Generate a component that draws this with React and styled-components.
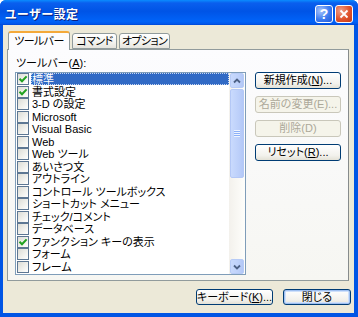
import styled, { createGlobalStyle } from "styled-components";

const GlobalStyle = createGlobalStyle`
  html, body {
    margin: 0;
    padding: 0;
    background: #ffffff;
  }
  body {
    font-family: "Liberation Sans", "Noto Sans CJK JP", sans-serif;
    font-size: 11px;
    font-feature-settings: "palt";
  }
`;

const toolbars = [
  { name: "標準", checked: true, selected: true },
  { name: "書式設定", checked: true },
  { name: "3-D の設定" },
  { name: "Microsoft" },
  { name: "Visual Basic" },
  { name: "Web" },
  { name: "Web ツール" },
  { name: "あいさつ文" },
  { name: "アウトライン" },
  { name: "コントロール ツールボックス" },
  { name: "ショートカット メニュー" },
  { name: "チェック/コメント" },
  { name: "データベース" },
  { name: "ファンクション キーの表示", checked: true },
  { name: "フォーム" },
  { name: "フレーム" },
];

function CheckMark() {
  return (
    <svg width="10" height="10" viewBox="0 0 10 10">
      <path
        d="M1.5 4.8 L4 7.3 L8.6 2.4"
        fill="none"
        stroke="#21a121"
        strokeWidth="2"
      />
    </svg>
  );
}

function Arrow({ down }) {
  return (
    <svg width="8" height="6" viewBox="0 0 8 6">
      <path
        d={down ? "M1 1.5 L4 4.5 L7 1.5" : "M1 4.5 L4 1.5 L7 4.5"}
        fill="none"
        stroke="#4d6185"
        strokeWidth="1.8"
      />
    </svg>
  );
}

export default function App() {
  return (
    <>
      <GlobalStyle />
      <Window>
        <TitleBar>
          <Title>ユーザー設定</Title>
          <CaptionButtons>
            <CaptionButton>?</CaptionButton>
            <CaptionButton close>
              <svg width="10" height="10" viewBox="0 0 10 10">
                <path
                  d="M1.5 1.5 L8.5 8.5 M8.5 1.5 L1.5 8.5"
                  stroke="#fff"
                  strokeWidth="1.8"
                />
              </svg>
            </CaptionButton>
          </CaptionButtons>
        </TitleBar>
        <Body>
          <TabStrip>
            <Tab active width="62px">ツールバー</Tab>
            <Tab width="45px">コマンド</Tab>
            <Tab width="51px">オプション</Tab>
          </TabStrip>
          <Panel>
            <ListColumn>
              <Label>
                ツールバー(<u>A</u>):
              </Label>
              <ListBox>
                <Items>
                  {toolbars.map((t) => (
                    <Item key={t.name}>
                      <Check>{t.checked && <CheckMark />}</Check>
                      <ItemText selected={t.selected}>{t.name}</ItemText>
                    </Item>
                  ))}
                </Items>
                <ScrollBar>
                  <ScrollButton>
                    <Arrow />
                  </ScrollButton>
                  <Track>
                    <Thumb>
                      <Grip />
                    </Thumb>
                  </Track>
                  <ScrollButton>
                    <Arrow down />
                  </ScrollButton>
                </ScrollBar>
              </ListBox>
            </ListColumn>
            <ButtonColumn>
              <Button>
                新規作成(<u>N</u>)...
              </Button>
              <Button disabled>名前の変更(E)...</Button>
              <Button disabled>削除(D)</Button>
              <Button>
                リセット(<u>R</u>)...
              </Button>
            </ButtonColumn>
          </Panel>
          <Footer>
            <Button width="77px" height="16px">
              キーボード(<u>K</u>)...
            </Button>
            <Button width="68px" height="16px" focused>
              閉じる
            </Button>
          </Footer>
        </Body>
      </Window>
    </>
  );
}

const Window = styled.div`
  width: 358px;
  height: 317px;
  box-sizing: border-box;
  display: flex;
  flex-direction: column;
  background: #0055e5;
  border-radius: 6px 6px 0 0;
  overflow: hidden;
`;

const TitleBar = styled.div`
  height: 25px;
  flex: none;
  display: flex;
  align-items: center;
  justify-content: space-between;
  padding: 0 5px;
  background: linear-gradient(
    #0a8cff 0%,
    #0a5fee 12%,
    #0054e6 45%,
    #0063f8 85%,
    #0058ec 95%,
    #0046d4 100%
  );
`;

const Title = styled.div`
  color: #ffffff;
  font-weight: bold;
  font-size: 12px;
  letter-spacing: 0.5px;
  text-shadow: 1px 1px 0 #0a1f80;
  padding-top: 1px;
`;

const CaptionButtons = styled.div`
  display: flex;
  gap: 2px;
  padding-top: 3px;
`;

const CaptionButton = styled.div`
  width: 18px;
  height: 18px;
  box-sizing: border-box;
  border: 1px solid #ffffff;
  border-radius: 3px;
  display: flex;
  align-items: center;
  justify-content: center;
  color: #ffffff;
  font-weight: bold;
  font-size: 14px;
  font-family: "Liberation Sans", sans-serif;
  background: ${(p) =>
    p.close
      ? "radial-gradient(circle at 30% 30%, #f0a08a, #e0532c 55%, #c23a1a)"
      : "radial-gradient(circle at 30% 30%, #a9c4fb, #3d7bf0 55%, #2459d8)"};
`;

const Body = styled.div`
  flex: 1;
  margin: 0 4px 4px 3px;
  background: #ece9d8;
  display: flex;
  flex-direction: column;
`;

const TabStrip = styled.div`
  display: flex;
  align-items: flex-end;
  height: 18px;
  margin-top: 6px;
  padding-left: 5px;
  position: relative;
  z-index: 1;
`;

const Tab = styled.div`
  box-sizing: border-box;
  width: ${(p) => p.width};
  height: ${(p) => (p.active ? "19px" : "16px")};
  margin-bottom: ${(p) => (p.active ? "-1px" : "0")};
  margin-right: ${(p) => (p.active ? "2px" : "2px")};
  padding-top: ${(p) => (p.active ? "2px" : "1px")};
  border: 1px solid #919b9c;
  border-bottom: ${(p) => (p.active ? "none" : "1px solid #919b9c")};
  border-top: ${(p) => (p.active ? "2px solid #f4a93a" : "1px solid #919b9c")};
  border-radius: 3px 3px 0 0;
  background: ${(p) =>
    p.active ? "#fcfcfe" : "linear-gradient(#ffffff, #f3f3ef 60%, #e6e5de)"};
  font-size: 11px;
  line-height: 13px;
  letter-spacing: -0.6px;
  text-align: center;
  color: #000000;
  white-space: nowrap;
`;

const Panel = styled.div`
  box-sizing: border-box;
  width: 342px;
  height: 232px;
  margin-left: 4px;
  border: 1px solid #919b9c;
  border-right-color: #868b8c;
  background: linear-gradient(#fcfcfe, #f6f6f2);
  display: flex;
  padding: 7px 0 0 7px;
  gap: 9px;
`;

const ListColumn = styled.div`
  display: flex;
  flex-direction: column;
`;

const Label = styled.div`
  height: 15px;
  line-height: 13px;
  font-size: 11px;
  color: #000000;
  margin-left: 1px;
  u {
    text-underline-offset: 1px;
  }
`;

const ListBox = styled.div`
  box-sizing: border-box;
  width: 231px;
  height: 203px;
  border: 1px solid #7f9db9;
  background: #ffffff;
  display: flex;
`;

const Items = styled.div`
  flex: 1;
  display: flex;
  flex-direction: column;
  overflow: hidden;
`;

const Item = styled.div`
  height: 12.5px;
  flex: none;
  display: flex;
  align-items: center;
`;

const Check = styled.div`
  width: 12px;
  height: 12px;
  box-sizing: border-box;
  margin: 0 2px 0 1px;
  border: 1px solid #5d7793;
  background: linear-gradient(135deg, #dcdcd5, #f2f2ee 60%, #ffffff);
  display: flex;
  align-items: center;
  justify-content: center;
  flex: none;
`;

const ItemText = styled.div`
  flex: 1;
  height: 12px;
  line-height: 12px;
  font-size: 11px;
  padding-left: 1px;
  white-space: nowrap;
  color: ${(p) => (p.selected ? "#ffffff" : "#000000")};
  background: ${(p) => (p.selected ? "#316ac5" : "transparent")};
  outline: ${(p) => (p.selected ? "1px dotted #c8d6f0" : "none")};
  outline-offset: -1px;
`;

const ScrollBar = styled.div`
  width: 16px;
  flex: none;
  display: flex;
  flex-direction: column;
  background: linear-gradient(90deg, #f3f1ec, #fefefb);
`;

const ScrollButton = styled.div`
  height: 15px;
  flex: none;
  box-sizing: border-box;
  margin: 0 1px;
  border: 1px solid #b7cbf6;
  border-radius: 2px;
  background: linear-gradient(90deg, #c8d9fc, #bed1fa 60%, #b2c7f6);
  display: flex;
  align-items: center;
  justify-content: center;
`;

const Track = styled.div`
  flex: 1;
  padding-top: 1px;
`;

const Thumb = styled.div`
  height: 89px;
  box-sizing: border-box;
  margin: 0 1px;
  border: 1px solid #b4c8f6;
  border-radius: 2px;
  background: linear-gradient(90deg, #c9dafd, #bdd0fa 60%, #b3c8f7);
  display: flex;
  align-items: center;
  justify-content: center;
`;

const Grip = styled.div`
  width: 6px;
  height: 7px;
  background: repeating-linear-gradient(
    #eef4fe 0,
    #eef4fe 1px,
    #8cb0f8 1px,
    #8cb0f8 2px
  );
`;

const ButtonColumn = styled.div`
  display: flex;
  flex-direction: column;
  gap: 7px;
  padding-top: 15px;
`;

const Button = styled.div`
  width: ${(p) => p.width || "86px"};
  height: ${(p) => p.height || "17px"};
  box-sizing: border-box;
  border: 1px solid ${(p) => (p.disabled ? "#c9c7ba" : "#003c74")};
  border-radius: 3px;
  background: ${(p) =>
    p.disabled ? "#f5f4ea" : "linear-gradient(#ffffff, #f2f1ec 70%, #e3e1d6)"};
  box-shadow: ${(p) =>
    p.focused ? "inset 0 0 0 1px #9fc0f1, inset 0 0 0 2px #cfe0fa" : "none"};
  color: ${(p) => (p.disabled ? "#aca899" : "#000000")};
  font-size: 11px;
  line-height: 13px;
  display: flex;
  align-items: center;
  justify-content: center;
  white-space: nowrap;
  u {
    text-underline-offset: 1px;
  }
`;

const Footer = styled.div`
  display: flex;
  justify-content: flex-end;
  gap: 10px;
  padding: 8px 3px 0 0;
`;
